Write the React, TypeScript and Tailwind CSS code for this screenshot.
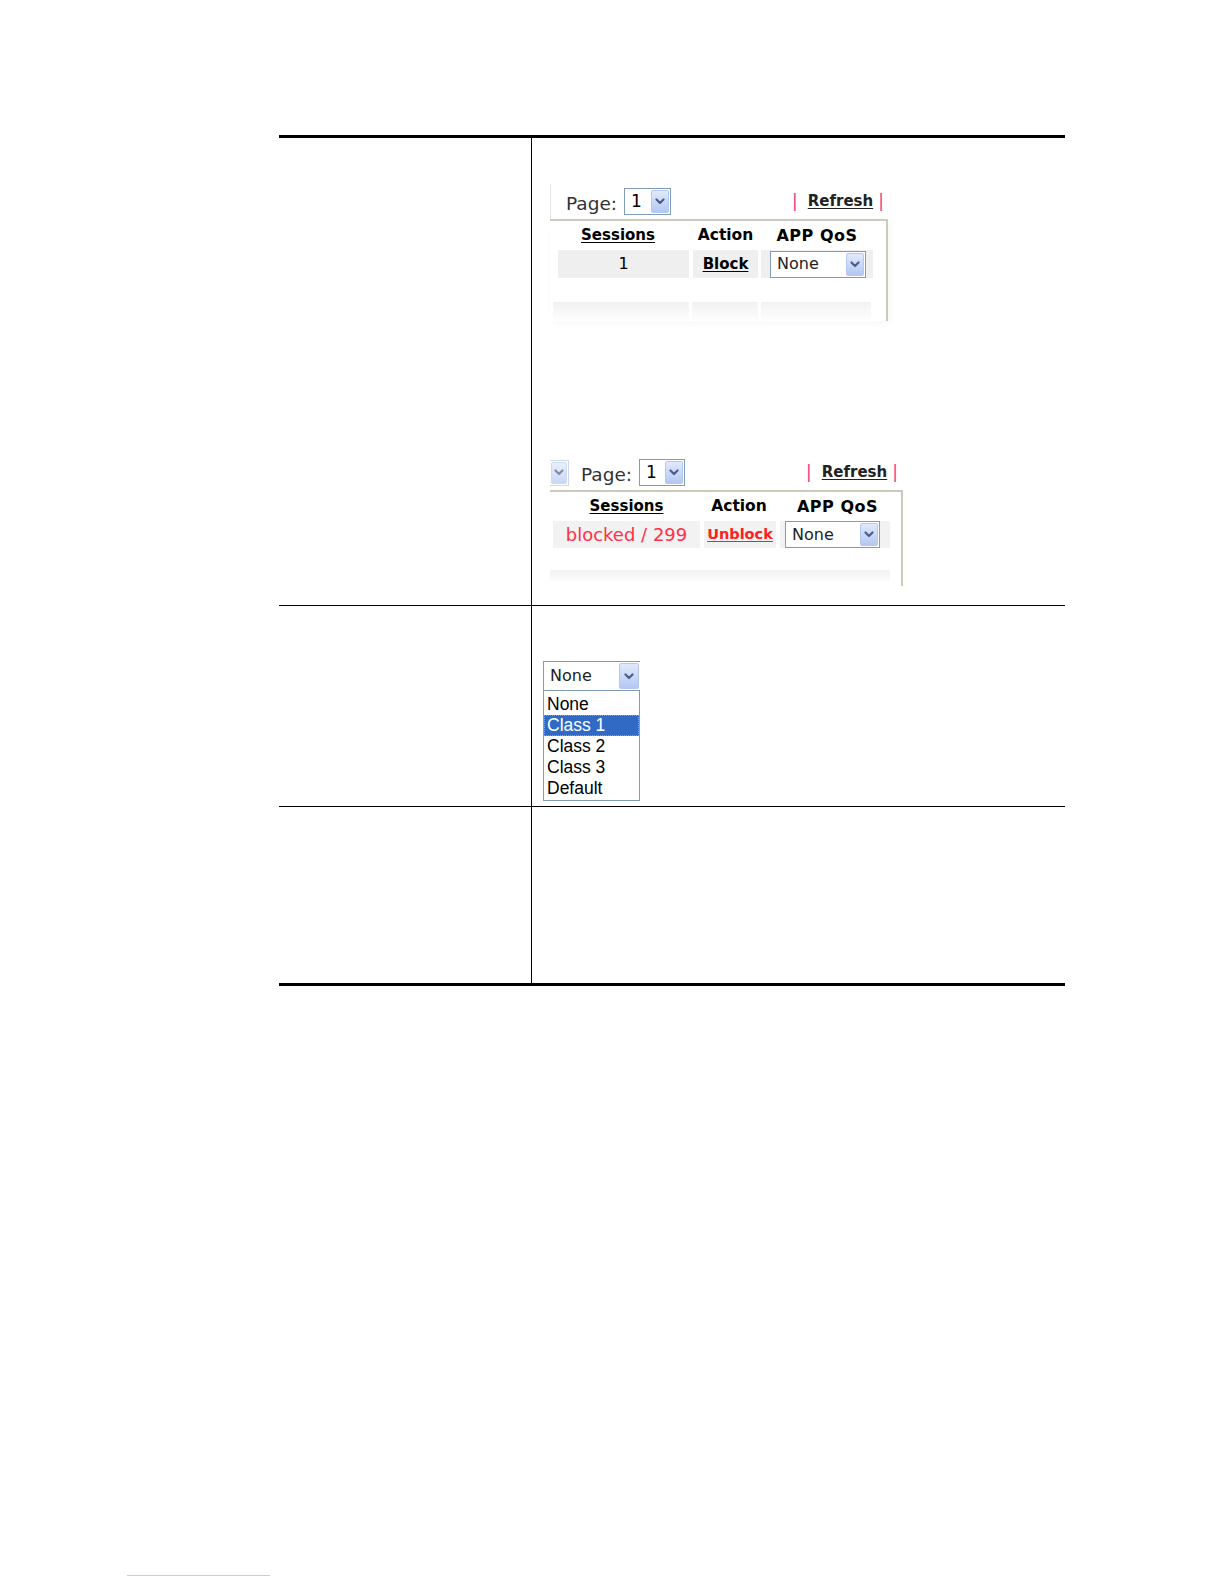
import React from "react";

function Arrow({ className }: { className: string }) {
  return (
    <div
      className={
        "flex items-center justify-center rounded-[2px] border border-[#b7c8f0] bg-gradient-to-b from-[#e1e9fc] to-[#b4c8f3] " +
        className
      }
    >
      <svg width="10" height="7" viewBox="0 0 10 7">
        <path
          d="M1.5 1.5 L5 5 L8.5 1.5"
          stroke="#4b5f8a"
          strokeWidth="2.2"
          fill="none"
          strokeLinecap="round"
          strokeLinejoin="round"
        />
      </svg>
    </div>
  );
}

function Pipe() {
  return <span className="text-[17px] leading-none text-[#f0338a]">|</span>;
}

function Screenshot1() {
  return (
    <div className="w-[340px] font-['DejaVu_Sans',sans-serif]">
      <div className="flex h-[35px] items-center border-l border-[#e6e6e6]">
        <span className="ml-[15px] mt-[4px] text-[18.5px] text-[#333]">Page:</span>
        <div className="ml-[7px] flex h-[27px] w-[47px] items-stretch border border-[#7f9db9] bg-white p-[1px]">
          <span className="flex flex-1 items-center pl-[5px] text-[17px] text-black">1</span>
          <Arrow className="w-[18px]" />
        </div>
        <div className="ml-[121px]">
          <Pipe />
        </div>
        <span className="ml-[10px] text-[15px] font-bold text-[#222] underline underline-offset-2">Refresh</span>
        <div className="ml-[5px]">
          <Pipe />
        </div>
      </div>
      <div className="h-[102px] w-[338px] border-t-2 border-r-2 border-[#cbcbbb] shadow-[2px_2px_6px_rgba(0,0,0,0.04)]">
        <div className="flex h-[29px] items-center pl-[8px] text-[15px] font-bold text-black">
          <span className="w-[131px] pr-[11px] text-center underline underline-offset-2">Sessions</span>
          <span className="ml-[4px] w-[65px] text-center text-[15.5px]">Action</span>
          <span className="ml-[3px] w-[112px] text-center text-[16px] tracking-[0.5px]">APP QoS</span>
        </div>
        <div className="flex h-[28px] items-stretch pl-[8px]">
          <div className="flex w-[131px] items-center justify-center bg-[#efefef] text-[16px] text-black">1</div>
          <div className="ml-[4px] flex w-[65px] items-center justify-center bg-[#efefef] text-[15px] font-bold text-black underline underline-offset-2">
            Block
          </div>
          <div className="ml-[3px] flex w-[112px] items-center bg-[#efefef] pl-[9px]">
            <div className="flex h-[27px] w-[96px] items-stretch border border-[#7f9db9] bg-white p-[1px]">
              <span className="flex flex-1 items-center pl-[5px] text-[16px] text-[#222]">None</span>
              <Arrow className="w-[18px]" />
            </div>
          </div>
        </div>
        <div className="mt-[24px] flex h-[20px] items-stretch pl-[3px] opacity-70">
          <div className="w-[136px] bg-gradient-to-b from-[#ececec] to-white" />
          <div className="ml-[3px] w-[66px] bg-gradient-to-b from-[#ececec] to-white" />
          <div className="ml-[3px] w-[110px] bg-gradient-to-b from-[#ececec] to-white" />
        </div>
      </div>
    </div>
  );
}

function Screenshot2() {
  return (
    <div className="w-[354px] font-['DejaVu_Sans',sans-serif]">
      <div className="flex h-[35px] items-center">
        <div className="flex h-[26px] w-[19px] items-stretch border border-l-0 border-[#b9c9e0] bg-white p-[1px] opacity-70">
          <Arrow className="w-[16px]" />
        </div>
        <span className="ml-[12px] mt-[4px] text-[18.5px] text-[#333]">Page:</span>
        <div className="ml-[7px] flex h-[27px] w-[46px] items-stretch border border-[#7f9db9] bg-white p-[1px]">
          <span className="flex flex-1 items-center pl-[5px] text-[17px] text-black">1</span>
          <Arrow className="w-[18px]" />
        </div>
        <div className="ml-[121px]">
          <Pipe />
        </div>
        <span className="ml-[10px] text-[15px] font-bold text-[#222] underline underline-offset-2">Refresh</span>
        <div className="ml-[5px]">
          <Pipe />
        </div>
      </div>
      <div className="h-[96px] w-[353px] border-t-2 border-r-2 border-[#cbcbbb]">
        <div className="flex h-[29px] items-center pl-[3px] text-[15px] font-bold text-black">
          <span className="w-[147px] text-center underline underline-offset-2">Sessions</span>
          <span className="ml-[3px] w-[72px] text-center text-[15.5px]">Action</span>
          <span className="ml-[10px] w-[105px] text-center text-[16px] tracking-[0.5px]">APP QoS</span>
        </div>
        <div className="flex h-[27px] items-stretch pl-[3px]">
          <div className="flex w-[147px] items-center justify-center bg-[#f2f2f2] text-[18px] text-[#ff3048]">
            blocked / 299
          </div>
          <div className="ml-[4px] flex w-[72px] items-center justify-center bg-[#f2f2f2] text-[14.5px] font-bold text-[#ff2020] underline underline-offset-2">
            Unblock
          </div>
          <div className="ml-[4px] flex w-[110px] items-center bg-[#f2f2f2] pl-[5px]">
            <div className="flex h-[27px] w-[95px] items-stretch border border-[#7f9db9] bg-white p-[1px]">
              <span className="flex flex-1 items-center pl-[5px] text-[16px] text-[#222]">None</span>
              <Arrow className="w-[18px]" />
            </div>
          </div>
        </div>
        <div className="mt-[22px] h-[14px] w-[340px] bg-gradient-to-b from-[#f2f2f2] to-white" />
      </div>
    </div>
  );
}

function Screenshot3() {
  const items = ["None", "Class 1", "Class 2", "Class 3", "Default"];
  return (
    <div className="w-[97px]">
      <div className="flex h-[29px] items-stretch border-l border-t border-[#7f9db9] bg-white p-[1px] font-['DejaVu_Sans',sans-serif]">
        <span className="flex flex-1 items-center pl-[5px] text-[16px] text-[#222]">None</span>
        <Arrow className="w-[20px]" />
      </div>
      <div className="border border-[#7f9db9] bg-white pb-[1px] pt-[3px] font-['Liberation_Sans',Arial,sans-serif]">
        {items.map((t) =>
          t === "Class 1" ? (
            <div
              key={t}
              className="h-[21px] border border-dotted border-[#8aa0d0] bg-[#316ac5] pl-[2px] text-[17.5px] leading-[19px] text-white"
            >
              {t}
            </div>
          ) : (
            <div key={t} className="h-[21px] pl-[3px] text-[17.5px] leading-[21px] text-black">
              {t}
            </div>
          )
        )}
      </div>
    </div>
  );
}

export default function App() {
  return (
    <div className="h-[1584px] w-[1224px] bg-white">
      <div className="pl-[279px] pt-[135px]">
        <div className="w-[786px] border-b-[3px] border-t-[3px] border-black">
          <div className="flex h-[468px] border-b border-black">
            <div className="w-[253px] border-r border-black" />
            <div className="flex-1 pl-[18px] pt-[46px]">
              <Screenshot1 />
              <div className="mt-[134px]">
                <Screenshot2 />
              </div>
            </div>
          </div>
          <div className="flex h-[201px] border-b border-black">
            <div className="w-[253px] border-r border-black" />
            <div className="flex-1 pl-[11px] pt-[55px]">
              <Screenshot3 />
            </div>
          </div>
          <div className="flex h-[176px]">
            <div className="w-[253px] border-r border-black" />
            <div className="flex-1" />
          </div>
        </div>
      </div>
      <div className="ml-[127px] mt-[589px] h-px w-[143px] bg-[#c5cbe0]" />
    </div>
  );
}
